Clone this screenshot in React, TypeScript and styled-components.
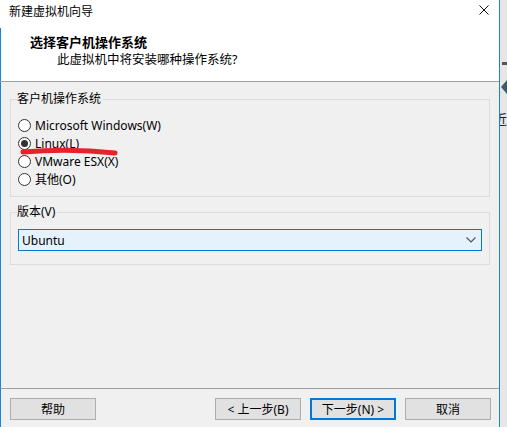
import styled, { createGlobalStyle } from "styled-components";

const GlobalStyle = createGlobalStyle`
  html, body {
    margin: 0;
    padding: 0;
    background: #ffffff;
  }
  body {
    font-family: "Noto Sans", "Noto Sans CJK SC", sans-serif;
    font-size: 12px;
    color: #000000;
  }
`;

const Page = styled.div`
  display: flex;
  width: 507px;
  height: 427px;
  overflow: hidden;
`;

const Window = styled.div`
  position: relative;
  display: flex;
  flex-direction: column;
  width: 499px;
  height: 427px;
  border-right: 1px solid #1883d7;
  background: #f0f0f0;
`;

const SideStrip = styled.div`
  position: relative;
  flex: 1;
  background: #e6e6e6;
  display: flex;
  flex-direction: column;
  align-items: flex-end;
`;

const StripDash = styled.div`
  margin-top: 62px;
  width: 5px;
  height: 3px;
  background: #50575e;
`;

const StripArrow = styled.div`
  margin-top: 15px;
  width: 0;
  height: 0;
  border-top: 7px solid transparent;
  border-bottom: 7px solid transparent;
  border-right: 6px solid #3d5a73;
`;

const StripGlyph = styled.div`
  margin-top: 17px;
  width: 7px;
  overflow: hidden;
  font-size: 13px;
  line-height: 16px;
  color: #222;
  direction: rtl;
`;

const Top = styled.div`
  background: #ffffff;
  height: 81px;
  border-bottom: 1px solid #a0a0a0;
  display: flex;
  flex-direction: column;
`;

const TitleBar = styled.div`
  height: 28px;
  display: flex;
  align-items: flex-start;
  justify-content: space-between;
  padding: 4px 10px 0 9px;
  box-sizing: border-box;
`;

const TitleText = styled.span`
  font-size: 12px;
  line-height: 16px;
`;

const CloseIcon = styled.svg`
  margin-top: 1px;
  width: 10px;
  height: 10px;
`;

const Header = styled.div`
  flex: 1;
  border-left: 1px solid #1883d7;
  display: flex;
  flex-direction: column;
  padding: 5px 0 0 29px;
`;

const HeaderTitle = styled.div`
  font-size: 13px;
  font-weight: 700;
  line-height: 18px;
`;

const HeaderSub = styled.div`
  font-size: 12.5px;
  line-height: 18px;
  padding-left: 27px;
`;

const Body = styled.div`
  flex: 1;
  border-left: 1px solid #1883d7;
  display: flex;
  flex-direction: column;
  padding: 9px 9px 0 9px;
`;

const Group = styled.fieldset<{ $padBottom: number }>`
  margin: 0;
  border: 1px solid #dcdcdc;
  padding: 0 0 ${(p) => p.$padBottom}px 7px;
  min-width: 0;
  & + & {
    margin-top: 7px;
  }
`;

const Legend = styled.legend`
  padding: 0 2px 0 0;
  margin-left: -1px;
  font-size: 12px;
  line-height: 16px;
`;

const RadioList = styled.div`
  display: flex;
  flex-direction: column;
  padding-top: 9px;
`;

const RadioRow = styled.label`
  display: flex;
  align-items: center;
  gap: 4px;
  height: 18px;
  font-size: 12px;
`;

const RadioCircle = styled.span<{ $checked?: boolean }>`
  width: 11px;
  height: 11px;
  border: 1px solid #333333;
  border-radius: 50%;
  background: #ffffff;
  display: flex;
  align-items: center;
  justify-content: center;
  &::after {
    content: "";
    width: 7px;
    height: 7px;
    border-radius: 50%;
    background: #333333;
    display: ${(p) => (p.$checked ? "block" : "none")};
  }
`;

const Select = styled.div`
  margin-top: 9px;
  margin-right: 7px;
  height: 20px;
  border: 1px solid #0078d7;
  background: #e5f1fb;
  display: flex;
  align-items: center;
  justify-content: space-between;
  padding: 0 5px 0 3px;
  font-size: 12px;
`;

const Chevron = styled.svg`
  width: 10px;
  height: 6px;
`;

const Spacer = styled.div`
  flex: 1;
`;

const Footer = styled.div`
  height: 39px;
  border-top: 1px solid #a0a0a0;
  border-left: 1px solid #1883d7;
  display: flex;
  align-items: flex-start;
  padding: 9px 8px 0 9px;
  box-sizing: border-box;
  gap: 9px;
`;

const Button = styled.button<{ $primary?: boolean }>`
  width: 86px;
  height: 22px;
  margin: 0;
  padding: 0;
  box-sizing: border-box;
  background: #e1e1e1;
  border: ${(p) => (p.$primary ? "2px solid #0078d7" : "1px solid #adadad")};
  font-family: inherit;
  font-size: 12px;
  color: #000;
  display: flex;
  align-items: center;
  justify-content: center;
  &:first-child {
    margin-right: auto;
  }
`;

const Scribble = styled.svg`
  position: absolute;
  left: 0;
  top: 0;
  pointer-events: none;
`;

const systems = [
  { label: "Microsoft Windows(W)", checked: false },
  { label: "Linux(L)", checked: true },
  { label: "VMware ESX(X)", checked: false },
  { label: "其他(O)", checked: false },
];

export default function App() {
  return (
    <Page>
      <GlobalStyle />
      <Window>
        <Top>
          <TitleBar>
            <TitleText>新建虚拟机向导</TitleText>
            <CloseIcon viewBox="0 0 10 10">
              <path d="M0.5 0.5 L9.5 9.5 M9.5 0.5 L0.5 9.5" stroke="#111" strokeWidth="1" />
            </CloseIcon>
          </TitleBar>
          <Header>
            <HeaderTitle>选择客户机操作系统</HeaderTitle>
            <HeaderSub>此虚拟机中将安装哪种操作系统?</HeaderSub>
          </Header>
        </Top>
        <Body>
          <Group $padBottom={8}>
            <Legend>客户机操作系统</Legend>
            <RadioList>
              {systems.map((s) => (
                <RadioRow key={s.label}>
                  <RadioCircle $checked={s.checked} />
                  {s.label}
                </RadioRow>
              ))}
            </RadioList>
          </Group>
          <Group $padBottom={13}>
            <Legend>版本(V)</Legend>
            <Select>
              <span>Ubuntu</span>
              <Chevron viewBox="0 0 10 6">
                <path d="M0.5 0.5 L5 5 L9.5 0.5" fill="none" stroke="#555" strokeWidth="1.2" />
              </Chevron>
            </Select>
          </Group>
          <Spacer />
        </Body>
        <Footer>
          <Button>帮助</Button>
          <Button>&lt; 上一步(B)</Button>
          <Button $primary>下一步(N) &gt;</Button>
          <Button>取消</Button>
        </Footer>
        <Scribble width="499" height="427">
          <path
            d="M23 152 Q70 148 115 153"
            fill="none"
            stroke="#e8222b"
            strokeWidth="5"
            strokeLinecap="round"
          />
        </Scribble>
      </Window>
      <SideStrip>
        <StripDash />
        <StripArrow />
        <StripGlyph>近</StripGlyph>
      </SideStrip>
    </Page>
  );
}
